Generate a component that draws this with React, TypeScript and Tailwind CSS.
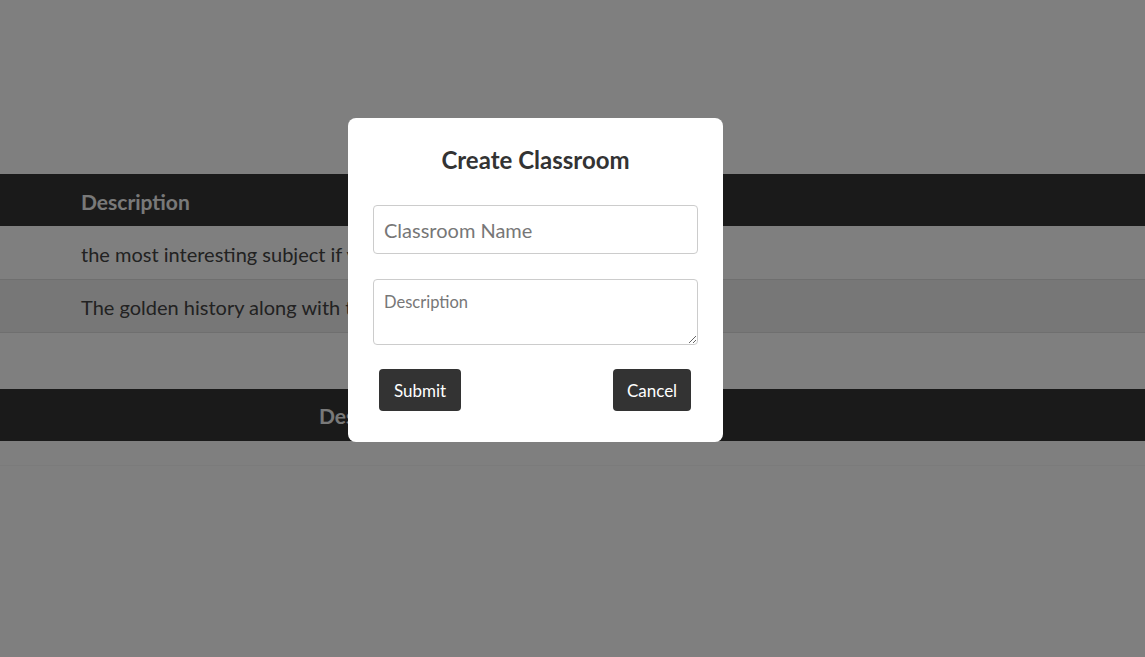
import React from 'react'

const font = { fontFamily: '"Lato", "Liberation Sans", sans-serif' }

export default function App() {
  return (
    <div className="relative min-h-screen bg-white text-[#444]" style={font}>
      {/* page under the modal */}
      <div className="h-[174px]" />
      <table className="w-full border-collapse text-[20px]">
        <thead>
          <tr className="bg-[#343434] text-[#f2f2f2] h-[52px]">
            <th className="text-left font-bold text-[21px] pl-[81px] pt-[3px]">Description</th>
          </tr>
        </thead>
        <tbody>
          <tr className="h-[53px] border-b border-[#dedede] bg-white">
            <td className="pl-[81px] pt-[3px]">the most interesting subject if you love numbers</td>
          </tr>
          <tr className="h-[53px] border-b border-[#dedede] bg-[#eeeeee]">
            <td className="pl-[81px] pt-[2px]">The golden history along with the great people</td>
          </tr>
        </tbody>
      </table>
      <div className="h-[56px]" />
      <table className="w-full border-collapse text-[20px]">
        <thead>
          <tr className="bg-[#343434] text-[#f2f2f2] h-[52px]">
            <th className="text-left font-bold text-[21px] pl-[319px] pt-[2px]">Description</th>
          </tr>
        </thead>
        <tbody>
          <tr className="h-[25px] border-b border-[#f6f6f6]">
            <td />
          </tr>
        </tbody>
      </table>

      {/* backdrop */}
      <div className="fixed inset-0 bg-black/50">
        <div className="absolute left-[348px] top-[118px] w-[375px] rounded-lg bg-white px-[25px] pt-[26px] pb-[31px]">
          <h2 className="text-center text-[24px] font-bold text-[#333] leading-[32px]">Create Classroom</h2>
          <form className="mt-[29px] flex flex-col">
            <input
              type="text"
              placeholder="Classroom Name"
              className="h-[49px] w-full rounded border border-[#ccc] px-[10px] text-[20px] text-[#333] placeholder:text-[#777] outline-none"
            />
            <textarea
              placeholder="Description"
              className="mt-[25px] h-[66px] w-full rounded border border-[#ccc] px-[10px] pt-[10px] text-[16.5px] text-[#333] placeholder:text-[#777] outline-none"
            />
            <div className="mt-[24px] flex justify-between pl-[6px] pr-[7px]">
              <button type="button" className="h-[42px] w-[82px] rounded bg-[#333] pt-[1px] text-[17px] text-white">
                Submit
              </button>
              <button type="button" className="h-[42px] w-[78px] rounded bg-[#333] pt-[1px] text-[17px] text-white">
                Cancel
              </button>
            </div>
          </form>
        </div>
      </div>
    </div>
  )
}
